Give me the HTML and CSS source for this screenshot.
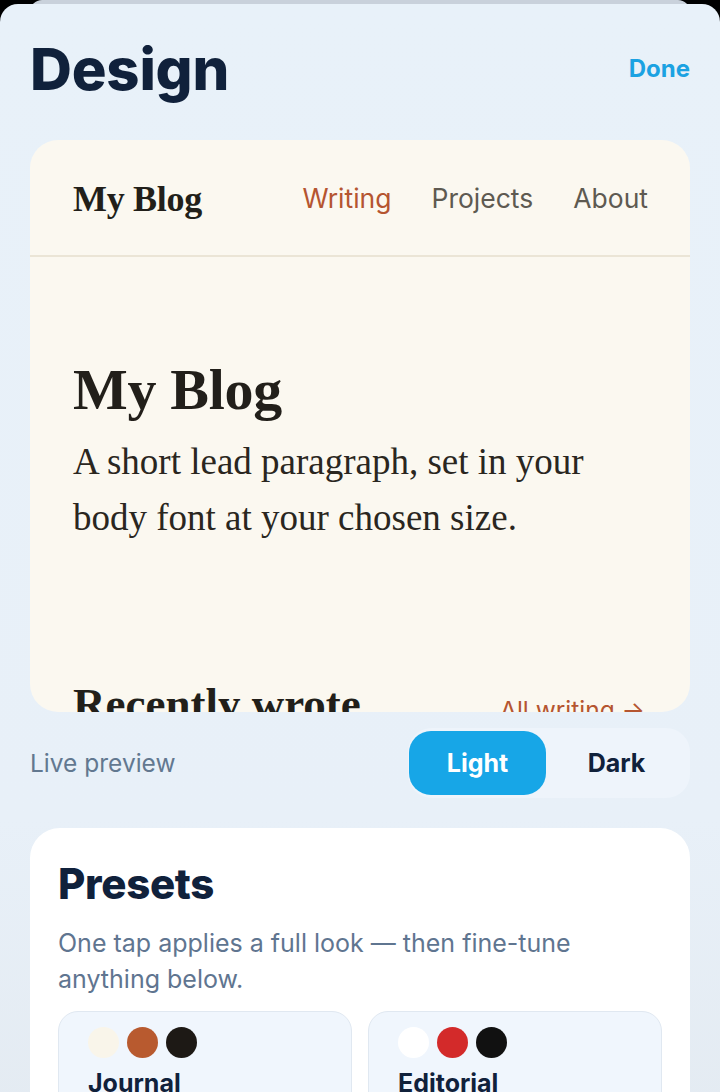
FILE: index.html
```html
<!DOCTYPE html>
<html lang="en">
<head>
<meta charset="utf-8">
<title>Design</title>
<link rel="stylesheet" href="styles.css">
</head>
<body>
<div class="behind"></div>
<div class="sheet">
  <header class="top">
    <h1 class="title">Design</h1>
    <span class="done">Done</span>
  </header>

  <section class="preview">
    <div class="blog-nav">
      <span class="blog-logo">My Blog</span>
      <nav class="blog-links">
        <span class="link active">Writing</span>
        <span class="link">Projects</span>
        <span class="link">About</span>
      </nav>
    </div>
    <div class="blog-hero">
      <h2 class="hero-title">My Blog</h2>
      <p class="hero-lead">A short lead paragraph, set in your body font at your chosen size.</p>
    </div>
    <div class="blog-section">
      <h3 class="section-title">Recently wrote</h3>
      <span class="section-link">All writing →</span>
    </div>
  </section>

  <div class="preview-bar">
    <span class="preview-label">Live preview</span>
    <div class="segmented">
      <span class="seg seg-on">Light</span>
      <span class="seg">Dark</span>
    </div>
  </div>

  <section class="card">
    <h2 class="card-title">Presets</h2>
    <p class="card-desc">One tap applies a full look — then fine-tune anything below.</p>
    <div class="presets">
      <div class="preset">
        <div class="swatches">
          <span class="dot dot-cream"></span>
          <span class="dot dot-rust"></span>
          <span class="dot dot-ink"></span>
        </div>
        <div class="preset-name">Journal</div>
      </div>
      <div class="preset">
        <div class="swatches">
          <span class="dot dot-white"></span>
          <span class="dot dot-red"></span>
          <span class="dot dot-black"></span>
        </div>
        <div class="preset-name">Editorial</div>
      </div>
    </div>
  </section>
</div>
</body>
</html>
```

FILE: styles.css
```css
* { box-sizing: border-box; }

html, body {
  margin: 0;
  padding: 0;
  background: #000;
  height: 1092px;
  overflow: hidden;
}

body {
  font-family: Inter, "Liberation Sans", sans-serif;
  color: #0f213b;
}

.behind {
  height: 20px;
  margin: 0 30px;
  background: #c9d1db;
  border-radius: 12px 12px 0 0;
}

.sheet {
  margin-top: -16px;
  min-height: 1100px;
  background: linear-gradient(180deg, #e8f1f9 0%, #e8f0f8 70%, #e3eaf1 100%);
  border-radius: 18px 18px 0 0;
  padding: 33px 30px 0;
}

.top {
  display: flex;
  align-items: center;
  justify-content: space-between;
  height: 64px;
}

.title {
  margin: 0;
  font-size: 58px;
  line-height: 64px;
  font-weight: 800;
  letter-spacing: -0.2px;
  color: #10213b;
}

.done {
  font-size: 24px;
  font-weight: 700;
  color: #1ba2e2;
  margin-top: -2px;
}

.preview {
  margin-top: 39px;
  height: 572px;
  background: #fbf8f0;
  border-radius: 28px;
  overflow: hidden;
}

.blog-nav {
  height: 117px;
  border-bottom: 2px solid #ebe5d6;
  display: flex;
  align-items: center;
  justify-content: space-between;
  padding: 0 42px 0 43px;
}

.blog-logo {
  font-family: "Liberation Serif", "DejaVu Serif", serif;
  font-weight: 700;
  font-size: 36px;
  color: #221f1a;
  letter-spacing: -0.3px;
  margin-top: 2px;
}

.blog-links {
  display: flex;
  gap: 40px;
}

.link {
  font-size: 26.5px;
  color: #5e5a51;
}

.link.active { color: #b55530; }

.blog-hero {
  padding: 101px 43px 0;
}

.hero-title {
  margin: 0;
  font-family: "Liberation Serif", "DejaVu Serif", serif;
  font-weight: 700;
  font-size: 58px;
  line-height: 64px;
  color: #221f1a;
  letter-spacing: -0.3px;
}

.hero-lead {
  margin: 12px 0 0;
  font-family: "Liberation Serif", "DejaVu Serif", serif;
  font-size: 37px;
  line-height: 56px;
  color: #2a2620;
  max-width: 560px;
}

.blog-section {
  margin-top: 132px;
  padding: 0 45px 0 43px;
  display: flex;
  align-items: baseline;
  justify-content: space-between;
}

.section-title {
  margin: 0;
  font-family: "Liberation Serif", "DejaVu Serif", serif;
  font-weight: 700;
  font-size: 45px;
  line-height: 53px;
  color: #221f1a;
}

.section-link {
  font-size: 24.5px;
  color: #b55530;
}

.preview-bar {
  margin-top: 16px;
  display: flex;
  align-items: center;
  justify-content: space-between;
}

.preview-label {
  font-size: 24.5px;
  color: #627890;
}

.segmented {
  width: 282px;
  height: 70px;
  padding: 3px 3px 3px 1px;
  background: #eef4fb;
  border-radius: 24px;
  display: flex;
}

.seg {
  flex: 1;
  display: flex;
  align-items: center;
  justify-content: center;
  font-size: 25px;
  font-weight: 700;
  color: #10213b;
  border-radius: 22px;
}

.seg-on {
  flex: 0 0 137px;
  background: #17a6e7;
  color: #fff;
}

.card {
  margin-top: 30px;
  background: #fff;
  border-radius: 30px;
  padding: 31px 28px 28px;
}

.card-title {
  margin: 0;
  font-size: 42px;
  line-height: 50px;
  font-weight: 800;
  letter-spacing: -0.3px;
  color: #10213b;
}

.card-desc {
  margin: 16px 0 0;
  font-size: 25px;
  line-height: 36px;
  color: #5f7590;
  max-width: 540px;
}

.presets {
  margin-top: 14px;
  display: grid;
  grid-template-columns: 1fr 1fr;
  gap: 16px;
}

.preset {
  background: #f0f6fd;
  border: 1.5px solid #e0e8f1;
  border-radius: 20px;
  padding: 15px 29px 20px;
  height: 130px;
}

.swatches {
  display: flex;
  gap: 8px;
}

.dot {
  width: 31px;
  height: 31px;
  border-radius: 50%;
}

.dot-cream { background: #f9f5ea; }
.dot-rust { background: #b85a2f; }
.dot-ink { background: #1d1915; }
.dot-white { background: #ffffff; }
.dot-red { background: #d32a2a; }
.dot-black { background: #111111; }

.preset-name {
  margin-top: 10px;
  font-size: 25px;
  font-weight: 700;
  color: #10213b;
}
```
